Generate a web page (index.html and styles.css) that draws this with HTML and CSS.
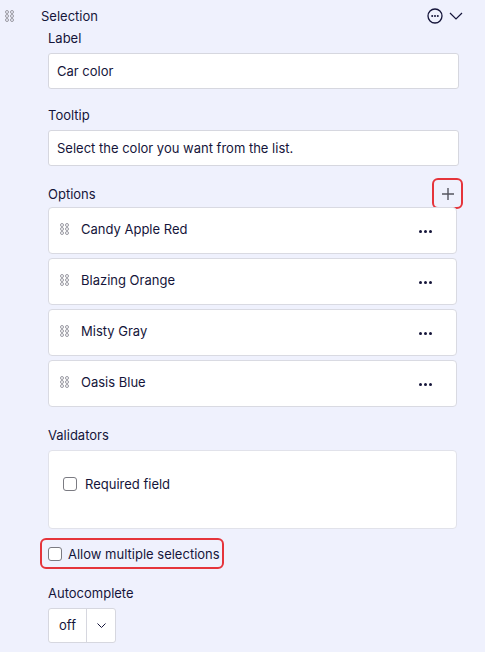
FILE: index.html
```html
<!DOCTYPE html>
<html lang="en">
<head>
    <meta charset="UTF-8">
    <meta name="viewport" content="width=device-width, initial-scale=1.0">
    <title>Selection question</title>
    <link rel="stylesheet" href="styles.css">
</head>
<body>
    <div class="question">
        <div class="question-header">
            <svg class="drag" width="9" height="12" viewBox="0 0 9 12"><g fill="none" stroke="#9a9aa2" stroke-width="1"><circle cx="2" cy="2" r="1.5"/><circle cx="7" cy="2" r="1.5"/><circle cx="2" cy="6" r="1.5"/><circle cx="7" cy="6" r="1.5"/><circle cx="2" cy="10" r="1.5"/><circle cx="7" cy="10" r="1.5"/></g></svg>
            <span class="question-title">Selection</span>
            <div class="header-actions">
                <svg width="16" height="16" viewBox="0 0 16 16"><circle cx="8" cy="8" r="7" fill="none" stroke="#15153a" stroke-width="1.3"/><circle cx="5.2" cy="8" r="1" fill="#15153a"/><circle cx="8" cy="8" r="1" fill="#15153a"/><circle cx="10.8" cy="8" r="1" fill="#15153a"/></svg>
                <svg width="14" height="8" viewBox="0 0 14 8"><path d="M1 1l6 6 6-6" fill="none" stroke="#15153a" stroke-width="1.2"/></svg>
            </div>
        </div>

        <div class="body">
            <div class="field">
                <div class="field-label">Label</div>
                <div class="text-input">Car color</div>
            </div>

            <div class="field">
                <div class="field-label">Tooltip</div>
                <div class="text-input">Select the color you want from the list.</div>
            </div>

            <div class="options-head">
                <span class="field-label">Options</span>
                <button class="add-btn highlighted">
                    <svg width="14" height="14" viewBox="0 0 14 14"><path d="M7 1v12M1 7h12" stroke="#55555f" stroke-width="1.4"/></svg>
                </button>
            </div>

            <div class="option-list">
                <div class="option">
                    <svg class="drag" width="9" height="12" viewBox="0 0 9 12"><g fill="none" stroke="#9a9aa2" stroke-width="1"><circle cx="2" cy="2" r="1.5"/><circle cx="7" cy="2" r="1.5"/><circle cx="2" cy="6" r="1.5"/><circle cx="7" cy="6" r="1.5"/><circle cx="2" cy="10" r="1.5"/><circle cx="7" cy="10" r="1.5"/></g></svg>
                    <span class="option-text">Candy Apple Red</span>
                    <span class="dots"><i></i><i></i><i></i></span>
                </div>
                <div class="option">
                    <svg class="drag" width="9" height="12" viewBox="0 0 9 12"><g fill="none" stroke="#9a9aa2" stroke-width="1"><circle cx="2" cy="2" r="1.5"/><circle cx="7" cy="2" r="1.5"/><circle cx="2" cy="6" r="1.5"/><circle cx="7" cy="6" r="1.5"/><circle cx="2" cy="10" r="1.5"/><circle cx="7" cy="10" r="1.5"/></g></svg>
                    <span class="option-text">Blazing Orange</span>
                    <span class="dots"><i></i><i></i><i></i></span>
                </div>
                <div class="option">
                    <svg class="drag" width="9" height="12" viewBox="0 0 9 12"><g fill="none" stroke="#9a9aa2" stroke-width="1"><circle cx="2" cy="2" r="1.5"/><circle cx="7" cy="2" r="1.5"/><circle cx="2" cy="6" r="1.5"/><circle cx="7" cy="6" r="1.5"/><circle cx="2" cy="10" r="1.5"/><circle cx="7" cy="10" r="1.5"/></g></svg>
                    <span class="option-text">Misty Gray</span>
                    <span class="dots"><i></i><i></i><i></i></span>
                </div>
                <div class="option">
                    <svg class="drag" width="9" height="12" viewBox="0 0 9 12"><g fill="none" stroke="#9a9aa2" stroke-width="1"><circle cx="2" cy="2" r="1.5"/><circle cx="7" cy="2" r="1.5"/><circle cx="2" cy="6" r="1.5"/><circle cx="7" cy="6" r="1.5"/><circle cx="2" cy="10" r="1.5"/><circle cx="7" cy="10" r="1.5"/></g></svg>
                    <span class="option-text">Oasis Blue</span>
                    <span class="dots"><i></i><i></i><i></i></span>
                </div>
            </div>

            <div class="field validators">
                <div class="field-label">Validators</div>
                <div class="validator-box">
                    <label class="check"><span class="box"></span>Required field</label>
                </div>
            </div>

            <label class="check multi highlighted"><span class="box"></span>Allow multiple selections</label>

            <div class="field autocomplete">
                <div class="field-label">Autocomplete</div>
                <div class="select">
                    <span class="select-value">off</span>
                    <span class="select-arrow">
                        <svg width="9" height="5" viewBox="0 0 9 5"><path d="M0.5 0.5l4 4 4-4" fill="none" stroke="#15153a" stroke-width="1"/></svg>
                    </span>
                </div>
            </div>
        </div>
    </div>
</body>
</html>
```

FILE: styles.css
```css
* {
    box-sizing: border-box;
}
body {
    margin: 0;
    background-color: #eff1fd;
    font-family: Inter, "Noto Sans", sans-serif;
    font-size: 13px;
    color: #15153a;
}
.question-header {
    display: flex;
    align-items: center;
    height: 30px;
    padding: 2px 22px 0 5px;
}
.question-title {
    margin-left: 27px;
}
.header-actions {
    margin-left: auto;
    display: flex;
    align-items: center;
    gap: 6px;
}
.body {
    padding: 0 26px 0 48px;
}
.field {
    margin-bottom: 18px;
}
.field-label {
    line-height: 16px;
    margin-bottom: 7px;
}
.text-input {
    height: 36px;
    line-height: 34px;
    padding: 0 8px;
    background-color: #fff;
    border: 1px solid #d6d7df;
    border-radius: 3px;
}
.options-head {
    display: flex;
    align-items: center;
    justify-content: space-between;
    margin-top: -4px;
}
.options-head .field-label {
    margin-bottom: 0;
}
.add-btn {
    width: 27px;
    height: 27px;
    margin-right: -2px;
    padding: 0;
    border: none;
    background: transparent;
    display: flex;
    align-items: center;
    justify-content: center;
}
.highlighted {
    outline: 2px solid #e5343b;
    border-radius: 4px;
}
.option-list {
    display: flex;
    flex-direction: column;
    gap: 4px;
    margin-right: 2px;
}
.option {
    display: flex;
    align-items: center;
    height: 47px;
    padding: 0 24px 3px 11px;
    background-color: #fff;
    border: 1px solid #d9dae2;
    border-radius: 4px;
}
.option-text {
    margin-left: 12px;
}
.dots {
    margin-left: auto;
    display: flex;
    gap: 2px;
    padding-top: 5px;
}
.dots i {
    width: 3px;
    height: 3px;
    border-radius: 50%;
    background-color: #15153a;
}
.validators {
    margin-top: 20px;
    margin-right: 2px;
    margin-bottom: 11px;
}
.validator-box {
    height: 79px;
    padding: 25px 14px 0;
    background-color: #fff;
    border: 1px solid #e1e2ea;
    border-radius: 4px;
}
.check {
    display: flex;
    align-items: center;
    line-height: 16px;
}
.box {
    width: 14px;
    height: 14px;
    border: 1px solid #7b7b82;
    border-radius: 3px;
    background-color: #fff;
    margin-right: 8px;
}
.multi {
    width: 180px;
    height: 27px;
    margin-left: -6px;
    padding-left: 6px;
}
.multi .box {
    margin-right: 6px;
}
.autocomplete {
    margin-top: 18px;
}
.select {
    display: inline-flex;
    height: 35px;
    background-color: #fff;
    border: 1px solid #d6d7df;
    border-radius: 3px;
}
.select-value {
    width: 38px;
    line-height: 33px;
    text-align: center;
    border-right: 1px solid #d6d7df;
}
.select-arrow {
    width: 28px;
    display: flex;
    align-items: center;
    justify-content: center;
}
```
